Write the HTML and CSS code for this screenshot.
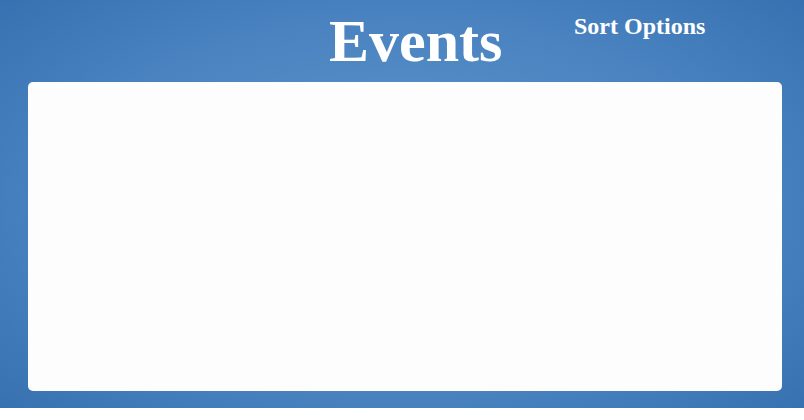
FILE: index.html
```html
<!DOCTYPE html>
<html>
<head>
<meta charset="utf-8">
<link rel="stylesheet" href="styles.css">
</head>
<body>
<div class="page">
  <header class="header">
    <h1 class="title">Events</h1>
    <div class="sort">Sort Options</div>
  </header>
  <main class="card"></main>
</div>
</body>
</html>
```
FILE: styles.css
```css
html, body {
  margin: 0;
  padding: 0;
  background: #ffffff;
  font-family: "Liberation Serif", "Times New Roman", serif;
}
.page {
  height: 408px;
  box-sizing: border-box;
  padding: 0 22px 17px 28px;
  display: flex;
  flex-direction: column;
  background: radial-gradient(ellipse 70% 75% at 50% 50%, #6197cd 0%, #4a83c0 60%, #3670b0 100%);
}
.header {
  height: 82px;
  flex: none;
  position: relative;
}
.title {
  margin: 0;
  position: absolute;
  left: 301px;
  top: 11px;
  font-size: 60px;
  line-height: 60px;
  font-weight: bold;
  color: #ffffff;
}
.sort {
  position: absolute;
  left: 546px;
  top: 12px;
  font-size: 24px;
  line-height: 28px;
  font-weight: bold;
  color: #ffffff;
}
.card {
  flex: 1;
  background: #fdfdfd;
  border-radius: 5px;
}
```
